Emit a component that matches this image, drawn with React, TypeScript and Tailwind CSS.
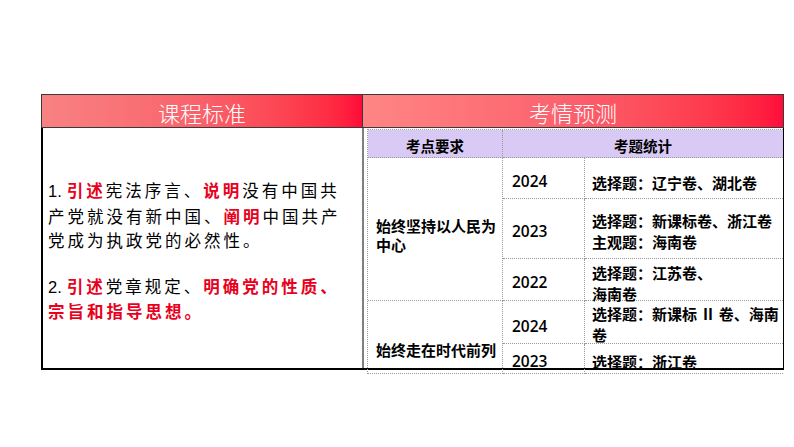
import React from "react";

const cjk = { fontFamily: '"Noto Sans CJK SC", sans-serif' };
const yearFont = { fontFamily: '"Open Sans", "Noto Sans CJK SC", sans-serif' };

function Red({ children }: { children: React.ReactNode }) {
  return <span className="font-bold text-[#e8001c]">{children}</span>;
}

export default function App() {
  const d = "border-dotted border-[#9a9a9a]";
  const year = "text-[15.5px] font-semibold text-black flex items-center pl-[9px]";
  const c3 = "text-[15px] font-bold text-black flex flex-col justify-center pl-[7px] leading-[21px] whitespace-nowrap";
  return (
    <div className="w-[794px] h-[447px] bg-white pt-[94px] pl-[41px] overflow-hidden" style={cjk}>
      <div className="w-[743px]">
        {/* header */}
        <div className="flex h-[34px] border border-[#3a3a3a]">
          <div className="w-[321px] border-r border-[#3a3a3a] bg-linear-to-r from-[#f88282] via-[#f9616b] to-[#ff0838] flex items-center justify-center text-white text-[22px] font-light leading-none pt-[1px]">
            课程标准
          </div>
          <div className="flex-1 bg-linear-to-r from-[#ff8585] via-[#fb606c] to-[#ff0a3a] flex items-center justify-center text-white text-[22px] font-light leading-none pt-[1px]">
            考情预测
          </div>
        </div>
        {/* body */}
        <div className="flex h-[242px] border-l-2 border-b-2 border-r border-black">
          <div className="w-[321px] border-r-2 border-[#808080] pl-[5px] pt-[50px] text-[16.5px] leading-[24.5px] tracking-[3px] text-black whitespace-nowrap">
            <p>
              <span className="tracking-normal mr-[5px]" style={{ fontFamily: '"Liberation Sans", sans-serif' }}>1.</span>
              <Red>引述</Red>宪法序言、<Red>说明</Red>没有中国共
              <br />
              产党就没有新中国、<Red>阐明</Red>中国共产
              <br />
              党成为执政党的必然性。
            </p>
            <p className="mt-[21px]">
              <span className="tracking-normal mr-[5px]" style={{ fontFamily: '"Liberation Sans", sans-serif' }}>2.</span>
              <Red>引述</Red>党章规定、<Red>明确党的性质、</Red>
              <br />
              <Red>宗旨和指导思想。</Red>
            </p>
          </div>
          <div className="flex-1 pl-[3px] pt-[1px]">
            <div className={`grid grid-cols-[135px_82px_1fr] grid-rows-[28px_41px_60px_42px_43px_30px] border-l border-t ${d}`}>
              <div className={`col-start-1 row-start-1 bg-[#d8caf4] border-r border-b ${d} flex items-center justify-center pt-[5px] text-[14.5px] font-bold text-black`}>
                考点要求
              </div>
              <div className={`col-start-2 col-span-2 row-start-1 bg-[#d8caf4] border-b ${d} flex items-center justify-center pt-[5px] text-[14.5px] font-bold text-black`}>
                考题统计
              </div>

              <div className={`col-start-1 row-start-2 row-span-3 border-r border-b ${d} flex items-center pl-[8px] pt-[12px] text-[15px] font-bold leading-[19px] text-black whitespace-nowrap`}>
                <span>始终坚持以人民为<br />中心</span>
              </div>

              <div className={`col-start-2 row-start-2 border-r border-b ${d} ${year} pt-[7px]`} style={yearFont}>2024</div>
              <div className={`col-start-3 row-start-2 border-b ${d} ${c3} pt-[9px]`}>
                <span>选择题：辽宁卷、湖北卷</span>
              </div>

              <div className={`col-start-2 row-start-3 border-r border-b ${d} ${year} pt-[6px]`} style={yearFont}>2023</div>
              <div className={`col-start-3 row-start-3 border-b ${d} ${c3} pt-[5px]`}>
                <span>选择题：新课标卷、浙江卷</span>
                <span>主观题：海南卷</span>
              </div>

              <div className={`col-start-2 row-start-4 border-r border-b ${d} ${year} pt-[7px]`} style={yearFont}>2022</div>
              <div className={`col-start-3 row-start-4 border-b ${d} ${c3} pt-[7px]`}>
                <span>选择题：江苏卷、</span>
                <span>海南卷</span>
              </div>

              <div className={`col-start-1 row-start-5 row-span-2 border-r border-b ${d} flex items-center pl-[8px] pt-[26px] text-[15px] font-bold text-black whitespace-nowrap`}>
                始终走在时代前列
              </div>

              <div className={`col-start-2 row-start-5 border-r border-b ${d} ${year} pt-[9px]`} style={yearFont}>2024</div>
              <div className={`col-start-3 row-start-5 border-b ${d} ${c3} pt-[3px]`}>
                <span>选择题：新课标 Ⅱ 卷、海南</span>
                <span>卷</span>
              </div>

              <div className={`col-start-2 row-start-6 border-r border-b ${d} ${year} pt-[6px]`} style={yearFont}>2023</div>
              <div className={`col-start-3 row-start-6 border-b ${d} ${c3} pt-[6px]`}>
                <span>选择题：浙江卷</span>
              </div>
            </div>
          </div>
        </div>
      </div>
    </div>
  );
}
